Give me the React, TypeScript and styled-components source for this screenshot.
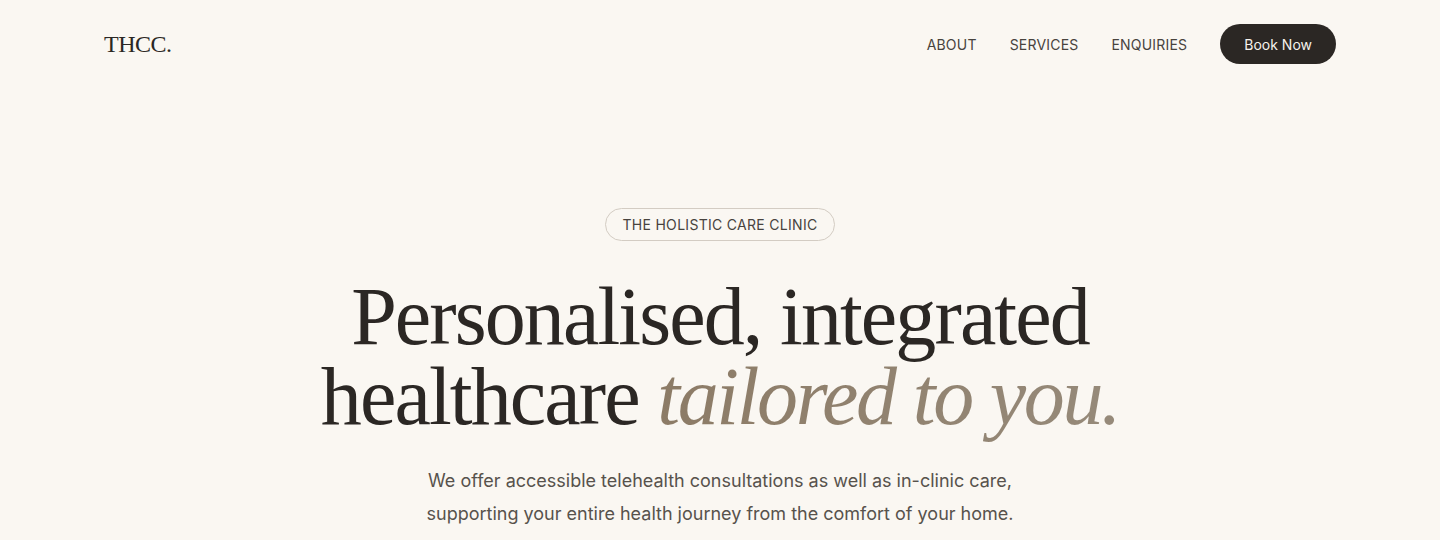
import styled, { createGlobalStyle } from "styled-components";

const GlobalStyle = createGlobalStyle`
  * { box-sizing: border-box; }
  body {
    margin: 0;
    background: #faf7f2;
    font-family: Inter, "Noto Sans", sans-serif;
    color: #2b2724;
  }
`;

const Page = styled.div`
  min-height: 540px;
  background: #faf7f2;
`;

const Header = styled.header`
  display: flex;
  align-items: center;
  justify-content: space-between;
  padding: 24px 104px 0;
  height: 64px;
`;

const Logo = styled.div`
  font-family: "Liberation Serif", "DejaVu Serif", serif;
  font-size: 24px;
  letter-spacing: -0.5px;
  color: #2b2724;
`;

const Nav = styled.nav`
  display: flex;
  align-items: center;
  gap: 33px;
`;

const NavLink = styled.a`
  font-size: 14px;
  letter-spacing: 0.2px;
  text-transform: uppercase;
  color: #48433e;
  text-decoration: none;
`;

const BookButton = styled.button`
  height: 40px;
  padding: 0 24px;
  border: none;
  border-radius: 20px;
  background: #2b2724;
  color: #f6f2ec;
  font-family: Inter, sans-serif;
  font-size: 14px;
  cursor: pointer;
`;

const Hero = styled.section`
  display: flex;
  flex-direction: column;
  align-items: center;
  text-align: center;
  padding-top: 144px;
`;

const Badge = styled.span`
  display: inline-flex;
  align-items: center;
  height: 33px;
  padding: 0 16px;
  border: 1px solid #d3ccc3;
  border-radius: 999px;
  font-size: 14px;
  letter-spacing: 0.3px;
  color: #48433e;
  text-transform: uppercase;
`;

const Heading = styled.h1`
  margin: 36px 0 0;
  font-family: "Liberation Serif", "DejaVu Serif", serif;
  font-weight: 400;
  font-size: 82px;
  line-height: 80px;
  letter-spacing: -1.9px;
  color: #2b2724;
`;

const Accent = styled.em`
  font-style: italic;
  letter-spacing: -2.4px;
  background: linear-gradient(90deg, #8c7b66, #968a7a);
  -webkit-background-clip: text;
  background-clip: text;
  color: transparent;
`;

const Lead = styled.p`
  margin: 27px 0 0;
  font-size: 18px;
  line-height: 33px;
  color: #57524c;
`;

export default function App() {
  return (
    <Page>
      <GlobalStyle />
      <Header>
        <Logo>THCC.</Logo>
        <Nav>
          <NavLink href="#">About</NavLink>
          <NavLink href="#">Services</NavLink>
          <NavLink href="#">Enquiries</NavLink>
          <BookButton>Book Now</BookButton>
        </Nav>
      </Header>
      <Hero>
        <Badge>The Holistic Care Clinic</Badge>
        <Heading>
          Personalised, integrated
          <br />
          healthcare <Accent>tailored to you.</Accent>
        </Heading>
        <Lead>
          We offer accessible telehealth consultations as well as in-clinic care,
          <br />
          supporting your entire health journey from the comfort of your home.
        </Lead>
      </Hero>
    </Page>
  );
}
